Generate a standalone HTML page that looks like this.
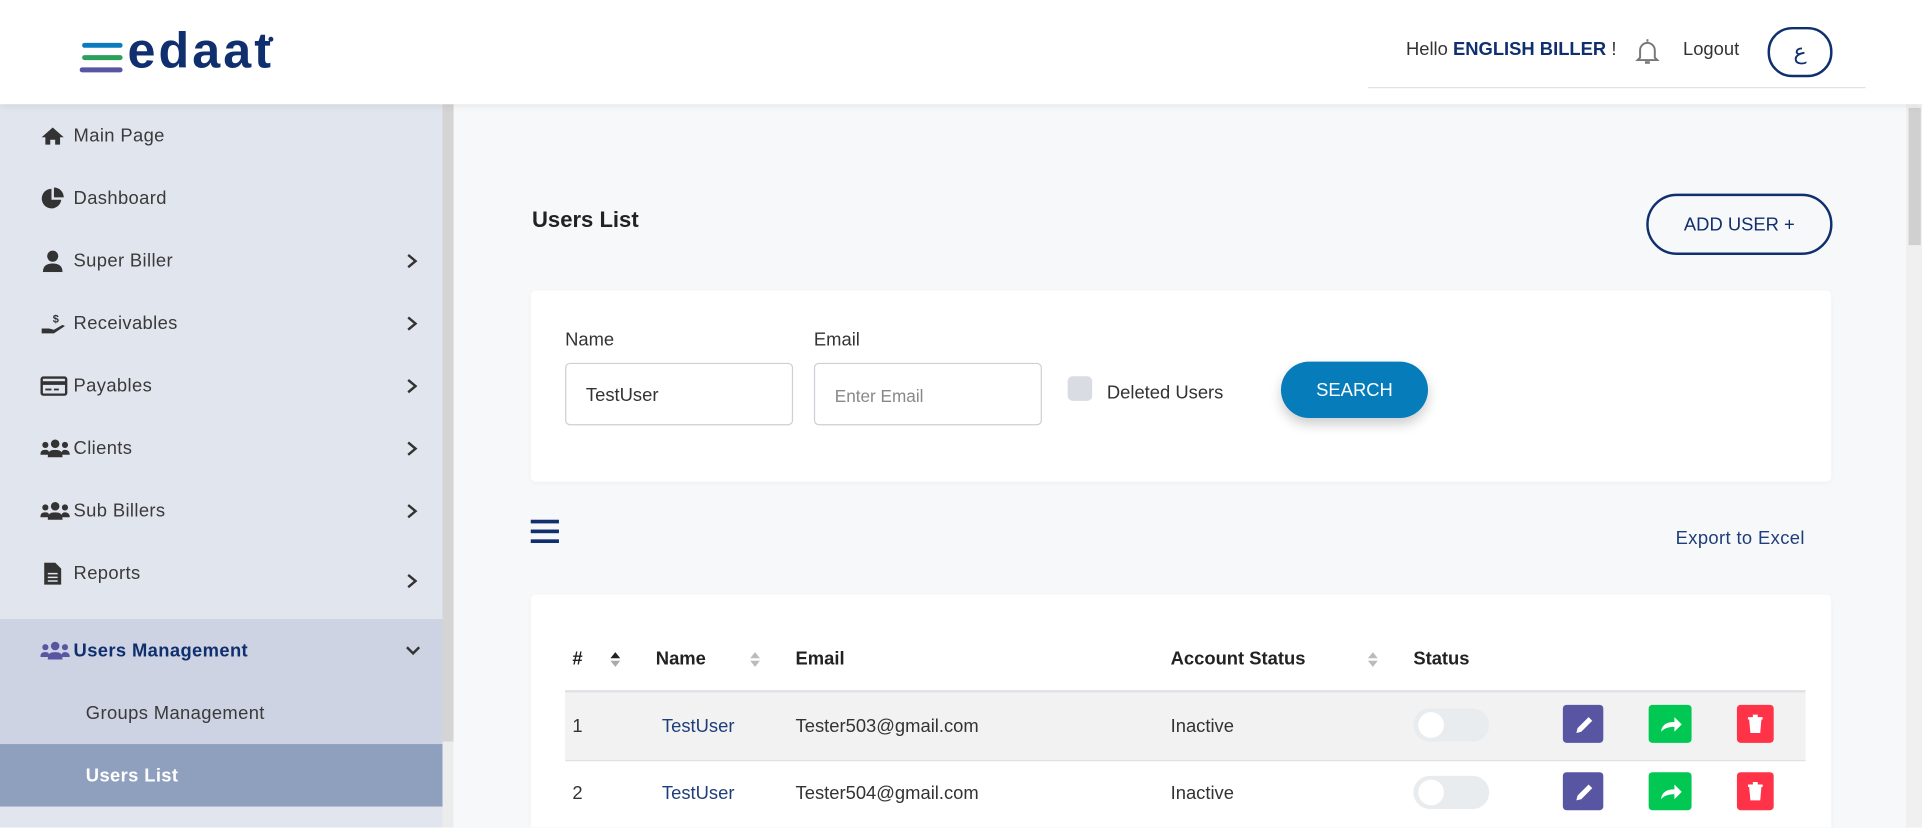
<!DOCTYPE html>
<html><head><meta charset="utf-8"><style>
html,body{margin:0;padding:0;width:1922px;height:828px;overflow:hidden;background:#f7f8fa}
#w{position:absolute;left:0;top:0;width:1568px;height:675px;transform:scale(1.22577);transform-origin:0 0;font-family:"Liberation Sans",Arial,sans-serif;color:#333;font-size:15px;background:#f7f8fa;overflow:hidden}
.a{position:absolute}
.hdr{left:0;top:0;width:1568px;height:85px;background:#fff;box-shadow:0 2px 6px rgba(0,0,0,.08);z-index:5}
.side{left:0;top:85px;width:361px;height:590px;background:#e1e5ee}
.it{position:absolute;left:0;width:361px;height:51px}
.it .t{position:absolute;left:60px;top:50%;transform:translateY(-50%);color:#3a3a3a;font-size:15px;letter-spacing:.3px}
.it svg.ic{position:absolute;left:33px;top:50%;transform:translateY(-50%)}
.chev{position:absolute;left:331px;top:50%;transform:translateY(-50%)}
.card{background:#fff;border-radius:4px;box-shadow:0 1px 4px rgba(0,0,0,.04)}
.inp{border:1px solid #ccd0d6;border-radius:4px;background:#fff;height:49px;width:184px}
.th{position:absolute;top:529px;font-weight:bold;color:#222;font-size:15px}
.td{position:absolute;font-size:15px;color:#333}
.btn{position:absolute;width:33px;height:31px;border-radius:3px}
.tog{position:absolute;left:1153px;width:62px;height:27px;border-radius:14px;background:#e9ecef}
.tog i{position:absolute;left:4px;top:3px;width:21px;height:21px;border-radius:50%;background:#fff}
</style></head><body><div id="w">
<div class="a hdr">
 <div class="a" style="left:67px;top:35px;width:33px;height:4px;background:#0a7bbd;border-radius:2px"></div>
 <div class="a" style="left:67px;top:45px;width:33px;height:4px;background:#2aa05a;border-radius:2px"></div>
 <div class="a" style="left:65px;top:55px;width:35px;height:4px;background:#5856a3;border-radius:2px"></div>
 <div class="a" style="left:104px;top:18px;font-size:41px;line-height:46px;font-weight:bold;color:#0f2f6e;letter-spacing:2.5px">edaat</div>
 <div class="a" style="left:219px;top:30px;width:4px;height:4px;border-radius:50%;background:#0f2f6e"></div>
 <div class="a" style="left:1147px;top:32px;font-size:15px;color:#333">Hello <b style="color:#0f2f6e">ENGLISH BILLER</b> !</div>
 <svg class="a" style="left:1333px;top:30px" width="22" height="24" viewBox="0 0 22 24"><path d="M11 2v2M5 17V11a6 6 0 0 1 12 0v6l2 2H3z" fill="none" stroke="#777" stroke-width="1.6"/><path d="M9 21h4" stroke="#777" stroke-width="2"/></svg>
 <div class="a" style="left:1373px;top:32px;color:#333">Logout</div>
 <div class="a" style="left:1442px;top:22px;width:49px;height:37px;border:2px solid #0f2f6e;border-radius:20px;text-align:center;line-height:37px;color:#0f2f6e;font-size:18px">ع</div>
 <div class="a" style="left:1116px;top:71px;width:406px;height:1px;background:#e2e2e2"></div>
</div>
<div class="a side">
 <div class="it" style="top:0"><svg class="ic" width="20" height="16" viewBox="0 0 20 16"><path d="M10 1L1 9h3v6h4v-4h4v4h4V9h3z" fill="#333"/></svg><span class="t">Main Page</span></div>
 <div class="it" style="top:51px"><svg class="ic" width="20" height="18" viewBox="0 0 20 18"><path d="M9 1a8 8 0 1 0 8 9H9z" fill="#333"/><path d="M11 0v8h8a8 8 0 0 0-8-8z" fill="#333"/></svg><span class="t">Dashboard</span></div>
 <div class="it" style="top:102px"><svg class="ic" width="20" height="18" viewBox="0 0 20 18"><circle cx="10" cy="5" r="4.5" fill="#333"/><path d="M2 18c0-5 3-7 8-7s8 2 8 7z" fill="#333"/></svg><span class="t">Super Biller</span><svg class="chev" width="10" height="12"><path d="M2 1l6 5-6 5" fill="none" stroke="#333" stroke-width="2"/></svg></div>
 <div class="it" style="top:153px"><svg class="ic" width="22" height="18" viewBox="0 0 22 18"><text x="10" y="8" font-size="9" font-weight="bold" fill="#333">$</text><path d="M1 13h6l4 1 7-4 2 1-9 6H1z" fill="#333"/></svg><span class="t">Receivables</span><svg class="chev" width="10" height="12"><path d="M2 1l6 5-6 5" fill="none" stroke="#333" stroke-width="2"/></svg></div>
 <div class="it" style="top:204px"><svg class="ic" width="22" height="16" viewBox="0 0 22 16"><rect x="1" y="1" width="20" height="14" rx="1.5" fill="none" stroke="#333" stroke-width="2"/><rect x="1" y="4" width="20" height="3" fill="#333"/><rect x="4" y="10" width="5" height="1.5" fill="#333"/><rect x="11" y="10" width="4" height="1.5" fill="#333"/></svg><span class="t">Payables</span><svg class="chev" width="10" height="12"><path d="M2 1l6 5-6 5" fill="none" stroke="#333" stroke-width="2"/></svg></div>
 <div class="it" style="top:255px"><svg class="ic" width="24" height="16" viewBox="0 0 24 16"><circle cx="12" cy="4" r="3.5" fill="#333"/><circle cx="4" cy="5" r="2.5" fill="#333"/><circle cx="20" cy="5" r="2.5" fill="#333"/><path d="M6 15c0-5 2-6 6-6s6 1 6 6zM0 13c0-3 1-4 4-4s3 1 3 4zM17 13c0-3 1-4 3-4s4 1 4 4z" fill="#333"/></svg><span class="t">Clients</span><svg class="chev" width="10" height="12"><path d="M2 1l6 5-6 5" fill="none" stroke="#333" stroke-width="2"/></svg></div>
 <div class="it" style="top:306px"><svg class="ic" width="24" height="16" viewBox="0 0 24 16"><circle cx="12" cy="4" r="3.5" fill="#333"/><circle cx="4" cy="5" r="2.5" fill="#333"/><circle cx="20" cy="5" r="2.5" fill="#333"/><path d="M6 15c0-5 2-6 6-6s6 1 6 6zM0 13c0-3 1-4 4-4s3 1 3 4zM17 13c0-3 1-4 3-4s4 1 4 4z" fill="#333"/></svg><span class="t">Sub Billers</span><svg class="chev" width="10" height="12"><path d="M2 1l6 5-6 5" fill="none" stroke="#333" stroke-width="2"/></svg></div>
 <div class="it" style="top:357px"><svg class="ic" style="left:36px" width="14" height="18" viewBox="0 0 14 18"><path d="M0 0h9l5 5v13H0z" fill="#333"/><path d="M3 9h8M3 12h8M3 15h8" stroke="#e1e5ee" stroke-width="1.2"/></svg><span class="t">Reports</span><svg class="chev" style="top:63%" width="10" height="12"><path d="M2 1l6 5-6 5" fill="none" stroke="#333" stroke-width="2"/></svg></div>
 <div class="a" style="left:0;top:420px;width:361px;height:102px;background:#cdd3e2"></div>
 <div class="it" style="top:420px"><svg class="ic" width="24" height="16" viewBox="0 0 24 16"><circle cx="12" cy="4" r="3.5" fill="#5856a3"/><circle cx="4" cy="5" r="2.5" fill="#5856a3"/><circle cx="20" cy="5" r="2.5" fill="#5856a3"/><path d="M6 15c0-5 2-6 6-6s6 1 6 6zM0 13c0-3 1-4 4-4s3 1 3 4zM17 13c0-3 1-4 3-4s4 1 4 4z" fill="#5856a3"/></svg><span class="t" style="color:#0f2f6e;font-weight:bold">Users Management</span><svg class="chev" style="left:330px;top:50%" width="14" height="10"><path d="M2 2l5 5 5-5" fill="none" stroke="#333" stroke-width="2"/></svg></div>
 <div class="it" style="top:471px"><span class="t" style="left:70px">Groups Management</span></div>
 <div class="a" style="left:0;top:522px;width:361px;height:51px;background:#8fa0bf"></div>
 <div class="it" style="top:522px"><span class="t" style="left:70px;color:#fff;font-weight:bold">Users List</span></div>
</div>
<div class="a" style="left:361px;top:85px;width:9px;height:520px;background:#d4d4d4"></div>
<div class="a" style="left:361px;top:605px;width:9px;height:70px;background:#ececec"></div>
<div class="a" style="left:1555px;top:85px;width:13px;height:590px;background:#f0f0f0"></div>
<div class="a" style="left:1557px;top:88px;width:10px;height:112px;background:#d0d0d0"></div>

<div class="a" style="left:434px;top:169px;font-size:18px;font-weight:bold;color:#222">Users List</div>
<div class="a" style="left:1343px;top:158px;width:148px;height:46px;border:2px solid #0f2f6e;border-radius:25px;text-align:center;line-height:48px;color:#0f2f6e;font-size:15px">ADD USER +</div>

<div class="a card" style="left:433px;top:237px;width:1061px;height:156px"></div>
<div class="a" style="left:461px;top:269px;color:#333">Name</div>
<div class="a" style="left:664px;top:269px;color:#333">Email</div>
<div class="a inp" style="left:461px;top:296px"><span class="a" style="left:16px;top:17px;color:#333">TestUser</span></div>
<div class="a inp" style="left:664px;top:296px"><span class="a" style="left:16px;top:18px;color:#888;font-size:14px">Enter Email</span></div>
<div class="a" style="left:871px;top:307px;width:20px;height:20px;background:#d9dce3;border-radius:4px"></div>
<div class="a" style="left:903px;top:312px;color:#333">Deleted Users</div>
<div class="a" style="left:1045px;top:295px;width:120px;height:46px;border-radius:23px;background:#067dba;color:#fff;text-align:center;line-height:48px;font-size:15px;box-shadow:0 5px 10px rgba(0,0,0,.2)">SEARCH</div>

<div class="a" style="left:433px;top:424px;width:23px;height:3px;background:#0f2f6e"></div>
<div class="a" style="left:433px;top:432px;width:23px;height:3px;background:#0f2f6e"></div>
<div class="a" style="left:433px;top:440px;width:23px;height:3px;background:#0f2f6e"></div>
<div class="a" style="left:1367px;top:431px;color:#1f3d7a;letter-spacing:.3px">Export to Excel</div>

<div class="a card" style="left:433px;top:485px;width:1061px;height:200px"></div>
<div class="th" style="left:467px">#</div>
<svg class="a" style="left:497px;top:531px" width="10" height="14"><path d="M1 6l4-5 4 5z" fill="#222"/><path d="M1 8l4 5 4-5z" fill="#aaa"/></svg>
<div class="th" style="left:535px">Name</div>
<svg class="a" style="left:611px;top:531px" width="10" height="14"><path d="M1 6l4-5 4 5z" fill="#bbb"/><path d="M1 8l4 5 4-5z" fill="#bbb"/></svg>
<div class="th" style="left:649px">Email</div>
<div class="th" style="left:955px">Account Status</div>
<svg class="a" style="left:1115px;top:531px" width="10" height="14"><path d="M1 6l4-5 4 5z" fill="#bbb"/><path d="M1 8l4 5 4-5z" fill="#bbb"/></svg>
<div class="th" style="left:1153px">Status</div>
<div class="a" style="left:461px;top:563px;width:1012px;height:2px;background:#dee2e6"></div>
<div class="a" style="left:461px;top:565px;width:1012px;height:55px;background:#f2f2f2"></div>
<div class="a" style="left:461px;top:620px;width:1012px;height:1px;background:#dee2e6"></div>

<div class="td" style="left:467px;top:584px">1</div>
<div class="td" style="left:540px;top:584px;color:#1f3d7a">TestUser</div>
<div class="td" style="left:649px;top:584px">Tester503@gmail.com</div>
<div class="td" style="left:955px;top:584px">Inactive</div>
<div class="tog" style="top:578px"><i></i></div>
<div class="td" style="left:467px;top:639px">2</div>
<div class="td" style="left:540px;top:639px;color:#1f3d7a">TestUser</div>
<div class="td" style="left:649px;top:639px">Tester504@gmail.com</div>
<div class="td" style="left:955px;top:639px">Inactive</div>
<div class="tog" style="top:633px"><i></i></div>

<div class="btn" style="left:1275px;top:575px;background:#5856a3"><svg width="33" height="31"><path d="M11 23l1-4 9-9 3 3-9 9z" fill="#fff"/></svg></div>
<div class="btn" style="left:1345px;top:575px;background:#00c853;width:35px"><svg width="35" height="31"><path d="M10 22c1-6 5-8 11-8v-4l6 6-6 6v-4c-5 0-8 1-11 4z" fill="#fff"/></svg></div>
<div class="btn" style="left:1417px;top:575px;background:#ff3347;width:30px"><svg width="30" height="31"><path d="M9 10h12v2H9zM13 8h4v2h-4zM10 12h10l-1 11h-8z" fill="#fff"/></svg></div>
<div class="btn" style="left:1275px;top:630px;background:#5856a3"><svg width="33" height="31"><path d="M11 23l1-4 9-9 3 3-9 9z" fill="#fff"/></svg></div>
<div class="btn" style="left:1345px;top:630px;background:#00c853;width:35px"><svg width="35" height="31"><path d="M10 22c1-6 5-8 11-8v-4l6 6-6 6v-4c-5 0-8 1-11 4z" fill="#fff"/></svg></div>
<div class="btn" style="left:1417px;top:630px;background:#ff3347;width:30px"><svg width="30" height="31"><path d="M9 10h12v2H9zM13 8h4v2h-4zM10 12h10l-1 11h-8z" fill="#fff"/></svg></div>
</div></body></html>
